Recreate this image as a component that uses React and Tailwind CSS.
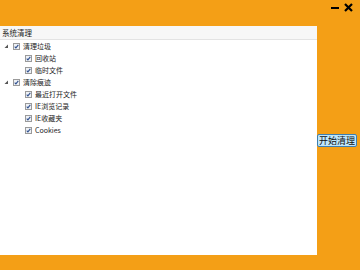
import React from "react";

const font = { fontFamily: '"Noto Sans CJK SC", "Liberation Sans", sans-serif' };

function Check() {
  return (
    <svg width="7" height="7" viewBox="0 0 7 7" className="shrink-0">
      <rect x="0.5" y="0.5" width="6" height="6" fill="#eef1f5" stroke="#9a9a9a" />
      <path d="M1.7 3.7 L2.9 4.9 L5.3 1.9" fill="none" stroke="#31518f" strokeWidth="1.1" />
    </svg>
  );
}

function Tri() {
  return (
    <svg width="5" height="5" viewBox="0 0 5 5" className="shrink-0">
      <polygon points="4,0.5 4,4 0.5,4" fill="#555" />
    </svg>
  );
}

function Row({ level, label }) {
  return (
    <div className="h-[12px] flex items-center">
      {level === 0 ? (
        <div className="w-[13px] pl-[4px] flex items-center">
          <Tri />
        </div>
      ) : (
        <div className="w-[25px]" />
      )}
      <Check />
      <span className="ml-[3px] text-[7px] leading-none text-[#222]">{label}</span>
    </div>
  );
}

export default function App() {
  return (
    <div className="w-[360px] h-[270px] bg-[#f49f16] flex flex-col" style={font}>
      <div className="h-[26px] flex justify-end items-start pr-[7px] pt-[3px] gap-[5px]">
        <div className="w-[8px] h-[9px] flex items-center">
          <div className="w-[8px] h-[2px] bg-black" />
        </div>
        <svg width="9" height="9" viewBox="0 0 9 9">
          <path d="M1 1 L8 8 M8 1 L1 8" stroke="#000" strokeWidth="2.2" />
        </svg>
      </div>
      <div className="h-[229px] flex">
        <div className="w-[317px] bg-white flex flex-col">
          <div className="h-[14px] bg-[#f7f7f7] border-b border-[#e3e3e3] flex items-center pl-[2px]">
            <span className="text-[7.5px] leading-none text-[#222]">系统清理</span>
          </div>
          <div className="flex flex-col">
            <Row level={0} label="清理垃圾" />
            <Row level={1} label="回收站" />
            <Row level={1} label="临时文件" />
            <Row level={0} label="清除痕迹" />
            <Row level={1} label="最近打开文件" />
            <Row level={1} label="IE浏览记录" />
            <Row level={1} label="IE收藏夹" />
            <Row level={1} label="Cookies" />
          </div>
        </div>
        <div className="flex-1 flex items-center">
          <button className="w-[40px] h-[13px] bg-[#bfe6fb] border border-[#3c7fb1] rounded-[2px] flex items-center justify-center text-[9px] leading-none text-[#111] p-0">
            开始清理
          </button>
        </div>
      </div>
    </div>
  );
}
